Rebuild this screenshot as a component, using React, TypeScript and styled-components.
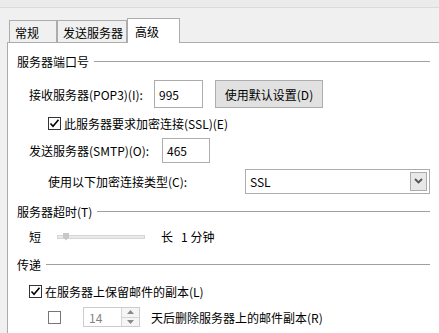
import styled, { createGlobalStyle } from "styled-components";

const GlobalStyle = createGlobalStyle`
  html, body {
    margin: 0;
    padding: 0;
    background: #f0f0f0;
    overflow: hidden;
  }
  body {
    font-family: "Noto Sans CJK SC", "Noto Sans", sans-serif;
    font-size: 12px;
    color: #000;
  }
`;

const Window = styled.div`
  width: 439px;
  height: 333px;
  display: flex;
  flex-direction: column;
`;

const TopStrip = styled.div`
  height: 7px;
  background: #ebebeb;
  border-bottom: 1px solid #dadada;
`;

const TabBar = styled.div`
  height: 34px;
  display: flex;
  align-items: flex-end;
  padding-left: 9px;
  position: relative;
  z-index: 1;
`;

const Tab = styled.div<{ $active?: boolean; $w: number }>`
  box-sizing: border-box;
  width: ${(p) => p.$w}px;
  height: ${(p) => (p.$active ? 25 : 22)}px;
  margin-bottom: ${(p) => (p.$active ? -1 : 0)}px;
  border: 1px solid #acacac;
  border-bottom: none;
  background: ${(p) => (p.$active ? "#fff" : "#f0f0f0")};
  display: flex;
  align-items: center;
  padding-left: ${(p) => (p.$active ? 7 : 5)}px;
  padding-top: ${(p) => (p.$active ? 0 : 1)}px;
  white-space: nowrap;
`;

const Panel = styled.div`
  flex: 1;
  background: #fff;
  margin-left: 7px;
  border-top: 1px solid #acacac;
  border-left: 1px solid #acacac;
  padding: 0 9px 0 9px;
  display: flex;
  flex-direction: column;
`;

// section title followed by a rule that runs to the right edge
const Section = styled.div<{ $h: number }>`
  height: ${(p) => p.$h}px;
  display: flex;
  align-items: center;
  gap: 5px;
  white-space: nowrap;

  &::after {
    content: "";
    flex: 1;
    height: 1px;
    background: #a0a0a0;
    margin-top: 1px;
  }
`;

const Row = styled.div<{ $h: number; $indent: number }>`
  height: ${(p) => p.$h}px;
  display: flex;
  align-items: center;
  padding-left: ${(p) => p.$indent}px;
  white-space: nowrap;
`;

const Label = styled.span<{ $w?: number; $ml?: number }>`
  width: ${(p) => (p.$w ? `${p.$w}px` : "auto")};
  margin-left: ${(p) => p.$ml ?? 0}px;
  flex-shrink: 0;
`;

const TextBox = styled.div<{ $w: number; $h: number }>`
  box-sizing: border-box;
  width: ${(p) => p.$w}px;
  height: ${(p) => p.$h}px;
  border: 1px solid #acacac;
  background: #fff;
  display: flex;
  align-items: center;
  padding-left: 4px;
`;

const Button = styled.div`
  box-sizing: border-box;
  width: 108px;
  height: 28px;
  margin-left: 12px;
  border: 1px solid #adadad;
  background: #e1e1e1;
  display: flex;
  align-items: center;
  justify-content: center;
`;

const CheckBox = styled.div<{ $disabled?: boolean }>`
  box-sizing: border-box;
  width: 13px;
  height: 13px;
  border: 1px solid ${(p) => (p.$disabled ? "#767676" : "#333")};
  background: #fff;
  display: flex;
  align-items: center;
  justify-content: center;
  margin-right: 3px;
  flex-shrink: 0;
`;

const Select = styled.div`
  box-sizing: border-box;
  width: 186px;
  height: 25px;
  border: 1px solid #acacac;
  background: #fff;
  display: flex;
  align-items: center;
  justify-content: space-between;
  padding: 2px 2px 2px 4px;
`;

const SelectButton = styled.div`
  box-sizing: border-box;
  width: 17px;
  height: 19px;
  border: 1px solid #acacac;
  background: #e8e8e8;
  display: flex;
  align-items: center;
  justify-content: center;
`;

const SliderTrack = styled.div`
  box-sizing: border-box;
  position: relative;
  width: 88px;
  height: 4px;
  margin: 0 16px 0 16px;
  background: #e7eaea;
  border: 1px solid #d6d6d6;
`;

const SliderThumb = styled.div`
  position: absolute;
  left: 5px;
  top: -3px;
  width: 6px;
  height: 8px;
  background: #c8c8c8;
  clip-path: polygon(0 0, 100% 0, 100% 60%, 50% 100%, 0 60%);
`;

const Spinner = styled.div`
  box-sizing: border-box;
  width: 57px;
  height: 20px;
  margin-left: 19px;
  border: 1px solid #cccccc;
  display: flex;
  align-items: stretch;
  color: #838383;
`;

const SpinValue = styled.div`
  flex: 1;
  display: flex;
  align-items: center;
  padding-left: 5px;
`;

const SpinButtons = styled.div`
  width: 17px;
  border-left: 1px solid #d4d4d4;
  display: flex;
  flex-direction: column;
  background: #f5f5f5;
`;

const SpinHalf = styled.div<{ $top?: boolean }>`
  flex: 1;
  display: flex;
  align-items: center;
  justify-content: center;
  border-bottom: ${(p) => (p.$top ? "1px solid #d4d4d4" : "none")};
`;

function Check() {
  return (
    <svg width="11" height="11" viewBox="0 0 11 11">
      <path d="M1.5 5.5 L4 8.2 L9.5 1.8" fill="none" stroke="#000" strokeWidth="1.6" />
    </svg>
  );
}

function Chevron() {
  return (
    <svg width="9" height="6" viewBox="0 0 9 6">
      <path d="M1 1 L4.5 4.5 L8 1" fill="none" stroke="#555" strokeWidth="1.8" />
    </svg>
  );
}

function Arrow({ up }: { up?: boolean }) {
  return (
    <svg width="7" height="4" viewBox="0 0 7 4">
      <path d={up ? "M0 4 L3.5 0 L7 4 Z" : "M0 0 L3.5 4 L7 0 Z"} fill="#8a8a8a" />
    </svg>
  );
}

export default function App() {
  return (
    <Window>
      <GlobalStyle />
      <TopStrip />
      <TabBar>
        <Tab $w={48}>常规</Tab>
        <Tab $w={70}>发送服务器</Tab>
        <Tab $w={53} $active>高级</Tab>
      </TabBar>
      <Panel>
        <Section $h={36}>服务器端口号</Section>
        <Row $h={30} $indent={12}>
          <Label $w={125}>接收服务器(POP3)(I):</Label>
          <TextBox $w={49} $h={28}>995</TextBox>
          <Button>使用默认设置(D)</Button>
        </Row>
        <Row $h={28} $indent={31}>
          <CheckBox><Check /></CheckBox>
          <Label>此服务器要求加密连接(SSL)(E)</Label>
        </Row>
        <Row $h={26} $indent={12}>
          <Label $w={133}>发送服务器(SMTP)(O):</Label>
          <TextBox $w={48} $h={25}>465</TextBox>
        </Row>
        <Row $h={36} $indent={31}>
          <Label $w={197}>使用以下加密连接类型(C):</Label>
          <Select>
            <span>SSL</span>
            <SelectButton><Chevron /></SelectButton>
          </Select>
        </Row>
        <Section $h={24}>服务器超时(T)</Section>
        <Row $h={27} $indent={12}>
          <Label>短</Label>
          <SliderTrack><SliderThumb /></SliderTrack>
          <Label>长&nbsp;&nbsp;&nbsp;1 分钟</Label>
        </Row>
        <Section $h={28}>传递</Section>
        <Row $h={26} $indent={12}>
          <CheckBox><Check /></CheckBox>
          <Label>在服务器上保留邮件的副本(L)</Label>
        </Row>
        <Row $h={26} $indent={31}>
          <CheckBox $disabled />
          <Spinner>
            <SpinValue>14</SpinValue>
            <SpinButtons>
              <SpinHalf $top><Arrow up /></SpinHalf>
              <SpinHalf><Arrow /></SpinHalf>
            </SpinButtons>
          </Spinner>
          <Label $ml={11}>天后删除服务器上的邮件副本(R)</Label>
        </Row>
      </Panel>
    </Window>
  );
}
